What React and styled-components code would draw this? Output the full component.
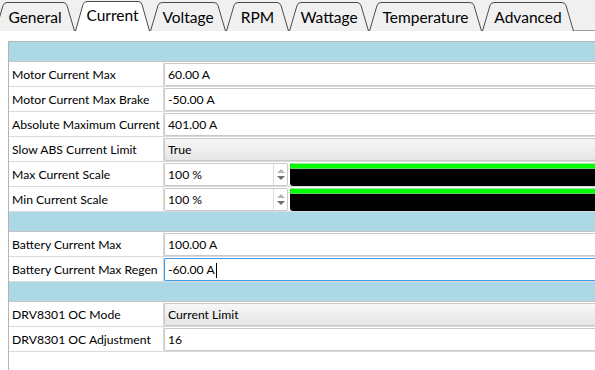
import React from 'react'
import styled, { createGlobalStyle } from 'styled-components'

const GlobalStyle = createGlobalStyle`
  html, body {
    margin: 0;
    padding: 0;
    background: #ffffff;
    overflow: hidden;
  }
`

const Window = styled.div`
  width: 595px;
  height: 370px;
  overflow: hidden;
  display: flex;
  flex-direction: column;
  font-family: Lato, 'Noto Sans', sans-serif;
  color: #000;
`

const TabBar = styled.div`
  display: flex;
  height: 31px;
  background: #f0f0f0;
  margin-left: -5px;
  flex-shrink: 0;
`

const TabItem = styled.div`
  position: relative;
  width: ${(p) => p.$w}px;
  height: 31px;
  flex-shrink: 0;
  display: flex;
  justify-content: center;
  box-sizing: border-box;
  padding-top: ${(p) => (p.$active ? 6 : 8)}px;
  font-size: 15.5px;
  line-height: 18px;
  z-index: ${(p) => (p.$active ? 2 : 1)};

  svg {
    position: absolute;
    left: 0;
    top: 0;
    z-index: -1;
  }
`

const TabFiller = styled.div`
  flex: 1;
  border-bottom: 1px solid #a0a0a0;
`

const Panel = styled.div`
  flex: 1;
  background: #ffffff;
  padding: 10px 0 0 8px;
  display: flex;
`

const Table = styled.div`
  flex: 1;
  border-left: 1px solid #b4b4b4;
  border-top: 1px solid #b4b4b4;
  font-size: 12.2px;
`

const Section = styled.div`
  height: 19px;
  background: #add8e6;
  border-bottom: 1px solid #c4c4c4;
`

const Row = styled.div`
  display: grid;
  grid-template-columns: 155px 1fr;
  height: 24px;
  border-bottom: 1px solid #d9d9d9;
`

const Label = styled.div`
  border-right: 1px solid #d9d9d9;
  padding: 1px 0 0 3px;
  line-height: 24px;
  white-space: nowrap;
  overflow: hidden;
`

const Cell = styled.div`
  display: flex;
  padding: 1px 0 1px 0;
  min-width: 0;
`

const Field = styled.div`
  flex: ${(p) => (p.$fixed ? '0 0 auto' : '1')};
  width: ${(p) => (p.$fixed ? `${p.$fixed}px` : 'auto')};
  display: flex;
  border: 1px solid ${(p) => (p.$focus ? '#3d9bea' : '#c9c9c9')};
  border-right: ${(p) => (p.$fixed ? undefined : 'none')};
  border-radius: ${(p) => (p.$fixed ? '2px' : '2px 0 0 2px')};
  background: ${(p) =>
    p.$combo ? 'linear-gradient(#f7f7f7, #e6e6e6)' : '#ffffff'};
  box-sizing: border-box;
`

const Value = styled.div`
  flex: 1;
  padding: 1px 0 0 3px;
  line-height: 20px;
  white-space: nowrap;
  display: flex;
  align-items: center;
`

const Caret = styled.span`
  display: inline-block;
  width: 1px;
  height: 15px;
  background: #000;
  margin-left: 1px;
`

const Arrows = styled.div`
  width: 13px;
  border-left: 1px solid #dcdcdc;
  display: flex;
  flex-direction: column;
  justify-content: center;
  align-items: center;
  gap: 3px;
`

const Arrow = styled.div`
  width: 0;
  height: 0;
  border-left: 4px solid transparent;
  border-right: 4px solid transparent;
  ${(p) =>
    p.$up
      ? `border-bottom: 4px solid ${p.$dim ? '#b4b4b4' : '#6e6e6e'};`
      : `border-top: 4px solid ${p.$dim ? '#b4b4b4' : '#6e6e6e'};`}
`

const Bar = styled.div`
  flex: 1;
  margin-left: 2px;
  background: #000;
  border-radius: 3px 0 0 3px;
  overflow: hidden;
`

const BarFill = styled.div`
  height: 4px;
  background: #00ff00;
  border-top: 1px solid #9ee89e;
  border-bottom: 1px solid #5fd35f;
`

const tabs = [
  { name: 'General', w: 80 },
  { name: 'Current', w: 75, active: true },
  { name: 'Voltage', w: 76 },
  { name: 'RPM', w: 63 },
  { name: 'Wattage', w: 80 },
  { name: 'Temperature', w: 113 },
  { name: 'Advanced', w: 92 },
]

function TabShape({ w, active }) {
  const bottom = 31
  const top = active ? 1.5 : 2.5
  const s = 9
  const d = `M0.5 ${bottom} L${s - 1} ${top + 3} Q${s} ${top} ${s + 3} ${top} L${w - s - 3} ${top} Q${w - s} ${top} ${w - s + 1} ${top + 3} L${w - 0.5} ${bottom}`
  return (
    <svg width={w} height={31} viewBox={`0 0 ${w} 31`}>
      <path d={d} fill={active ? '#ffffff' : '#f0f0f0'} stroke="#4a4a4a" strokeWidth="1" />
    </svg>
  )
}

function Spin({ value }) {
  return (
    <Cell>
      <Field $fixed={124}>
        <Value>{value}</Value>
        <Arrows>
          <Arrow $up $dim />
          <Arrow />
        </Arrows>
      </Field>
      <Bar>
        <BarFill />
      </Bar>
    </Cell>
  )
}

function Edit({ value, combo, focus }) {
  return (
    <Cell>
      <Field $combo={combo} $focus={focus}>
        <Value>
          {value}
          {focus && <Caret />}
        </Value>
      </Field>
    </Cell>
  )
}

export default function App() {
  return (
    <Window>
      <GlobalStyle />
      <TabBar>
        {tabs.map((t) => (
          <TabItem key={t.name} $w={t.w} $active={t.active}>
            <TabShape w={t.w} active={t.active} />
            {t.name}
          </TabItem>
        ))}
        <TabFiller />
      </TabBar>
      <Panel>
        <Table>
          <Section />
          <Row>
            <Label>Motor Current Max</Label>
            <Edit value="60.00 A" />
          </Row>
          <Row>
            <Label>Motor Current Max Brake</Label>
            <Edit value="-50.00 A" />
          </Row>
          <Row>
            <Label>Absolute Maximum Current</Label>
            <Edit value="401.00 A" />
          </Row>
          <Row>
            <Label>Slow ABS Current Limit</Label>
            <Edit value="True" combo />
          </Row>
          <Row>
            <Label>Max Current Scale</Label>
            <Spin value="100 %" />
          </Row>
          <Row>
            <Label>Min Current Scale</Label>
            <Spin value="100 %" />
          </Row>
          <Section />
          <Row>
            <Label>Battery Current Max</Label>
            <Edit value="100.00 A" />
          </Row>
          <Row>
            <Label>Battery Current Max Regen</Label>
            <Edit value="-60.00 A" focus />
          </Row>
          <Section />
          <Row>
            <Label>DRV8301 OC Mode</Label>
            <Edit value="Current Limit" combo />
          </Row>
          <Row>
            <Label>DRV8301 OC Adjustment</Label>
            <Edit value="16" />
          </Row>
        </Table>
      </Panel>
    </Window>
  )
}
